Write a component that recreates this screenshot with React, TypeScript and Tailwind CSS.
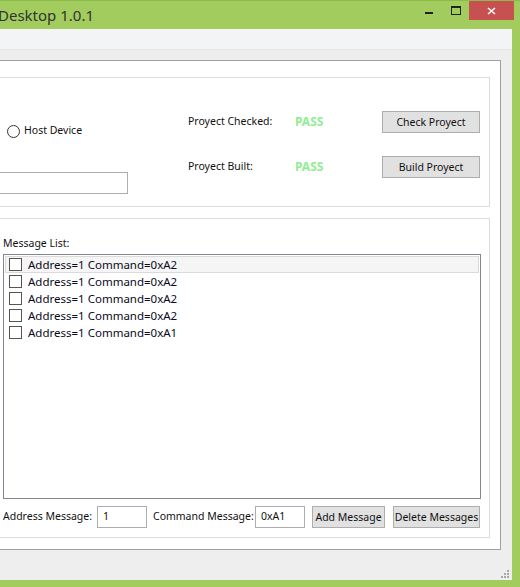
const messages = ["0xA2", "0xA2", "0xA2", "0xA2", "0xA1"];

const WinButton = ({ label, className }: { label: string; className: string }) => (
  <button className={`h-[22px] shrink-0 whitespace-nowrap border border-[#adadad] bg-[#e1e1e1] text-[10.5px] leading-none text-[#111] ${className}`}>
    {label}
  </button>
);

const App = () => {
  return (
    <div className="w-[520px] h-[587px] bg-[#a2cd5e] flex flex-col overflow-hidden font-['Noto_Sans',sans-serif] text-[10.5px] text-[#111] whitespace-nowrap">
      {/* Title bar */}
      <div className="h-[29px] flex items-start border-t border-[#8dbb4c]">
        <span className="-ml-[2px] mt-[4px] text-[15px] leading-[20px] text-[#333]">Desktop 1.0.1</span>
        <div className="ml-auto flex items-start">
          <div className="w-[8px] h-[2px] bg-[#222] mt-[11px] mr-[18px]" />
          <div className="w-[10px] h-[9px] border border-t-2 border-[#222] mt-[5px] mr-[8px]" />
          <div className="w-[45px] h-[19px] bg-[#c75050] flex items-center justify-center mr-[6px]">
            <svg width="9" height="8" viewBox="0 0 9 8">
              <path d="M1 1 L8 7 M8 1 L1 7" stroke="#fff" strokeWidth="1.6" />
            </svg>
          </div>
        </div>
      </div>

      {/* Client area */}
      <div className="flex-1 mr-[8px] mb-[7px] bg-[#eeeeee] flex flex-col relative">
        <div className="h-[21px] bg-[#f3f4f6] border-b border-[#e6e6e6]" />
        <div className="h-[10px]" />

        <div className="h-[490px] mr-[11px] bg-white border-t border-r border-b border-[#a0a0a0] flex flex-col pt-[16px] pr-[10px] pb-[11px]">
          {/* Project group */}
          <div className="h-[130px] border-t border-r border-b border-[#dcdcdc] flex">
            <div className="w-[128px] flex flex-col">
              <div className="mt-[45px] h-[16px] flex items-center pl-[7px]">
                <span className="w-[13px] h-[13px] rounded-full border border-[#333] bg-white" />
                <span className="ml-[4px]">Host Device</span>
              </div>
              <div className="mt-[33px] h-[22px] border-t border-r border-b border-[#abadb3] bg-white" />
            </div>
            <div className="ml-[60px] flex flex-col">
              <div className="mt-[33px] flex items-center h-[22px]">
                <span className="w-[107px]">Proyect Checked:</span>
                <span className="w-[87px] text-[12px] font-bold text-[#90ee90]">PASS</span>
                <WinButton label="Check Proyect" className="w-[98px]" />
              </div>
              <div className="mt-[23px] flex items-center h-[22px]">
                <span className="w-[107px]">Proyect Built:</span>
                <span className="w-[87px] text-[12px] font-bold text-[#90ee90]">PASS</span>
                <WinButton label="Build Proyect" className="w-[98px]" />
              </div>
            </div>
          </div>

          {/* Message group */}
          <div className="mt-[11px] flex-1 border-t border-r border-b border-[#dcdcdc] flex flex-col pl-[3px] pr-[8px]">
            <div className="mt-[16px] leading-[16px]">Message List:</div>
            <div className="mt-[3px] h-[245px] border border-[#828790] bg-white p-[1px] flex flex-col">
              {messages.map((cmd, i) => (
                <div
                  key={i}
                  className={`h-[17px] flex items-center pl-[3px] border ${i === 0 ? "bg-[#f5f5f5] border-[#dadada]" : "border-transparent"}`}
                >
                  <span className="w-[13px] h-[13px] border border-[#555] bg-white" />
                  <span className="ml-[6px] text-[11.5px] text-[#0a0a20]">Address=1 Command={cmd}</span>
                </div>
              ))}
            </div>
            <div className="mt-[7px] h-[22px] flex items-center">
              <span className="w-[94px] shrink-0">Address Message:</span>
              <div className="w-[50px] h-[22px] shrink-0 border border-[#abadb3] flex items-center pl-[5px]">1</div>
              <span className="ml-[6px] w-[102px] shrink-0">Command Message:</span>
              <div className="w-[50px] h-[22px] shrink-0 border border-[#abadb3] flex items-center pl-[5px]">0xA1</div>
              <WinButton label="Add Message" className="ml-[7px] w-[73px]" />
              <WinButton label="Delete Messages" className="ml-[8px] w-[87px]" />
            </div>
          </div>
        </div>

        {/* Resize grip */}
        <svg className="absolute right-[2px] bottom-[1px]" width="9" height="9" viewBox="0 0 9 9">
          <g fill="#a8a8a8">
            <rect x="6" y="0" width="2" height="2" />
            <rect x="3" y="3" width="2" height="2" />
            <rect x="6" y="3" width="2" height="2" />
            <rect x="0" y="6" width="2" height="2" />
            <rect x="3" y="6" width="2" height="2" />
            <rect x="6" y="6" width="2" height="2" />
          </g>
        </svg>
      </div>
    </div>
  );
};

export default App;
